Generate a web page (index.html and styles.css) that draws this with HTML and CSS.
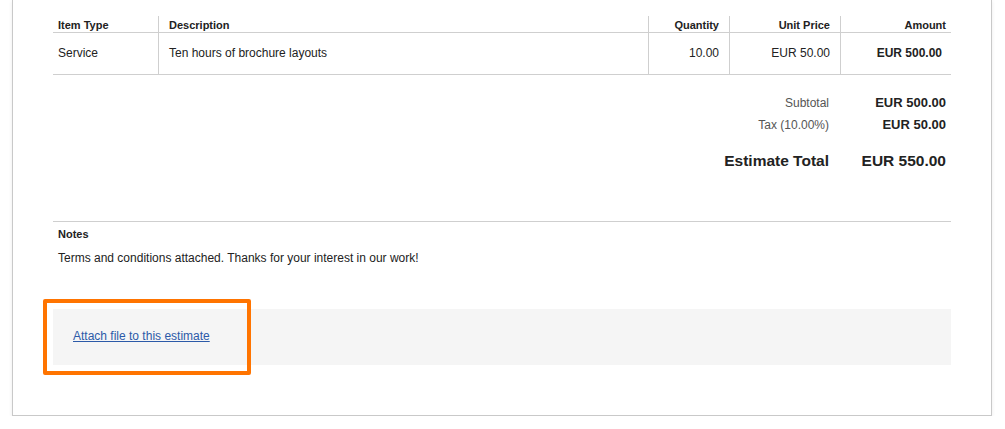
FILE: index.html
```html
<!DOCTYPE html>
<html lang="en">
<head>
<meta charset="utf-8">
<title>Estimate</title>
<link rel="stylesheet" href="styles.css">
</head>
<body>
<div class="card">
  <div class="items">
    <div class="cell head">Item Type</div>
    <div class="cell head sep">Description</div>
    <div class="cell head sep num">Quantity</div>
    <div class="cell head sep num">Unit Price</div>
    <div class="cell head sep num last">Amount</div>

    <div class="cell body">Service</div>
    <div class="cell body sep">Ten hours of brochure layouts</div>
    <div class="cell body sep num">10.00</div>
    <div class="cell body sep num">EUR 50.00</div>
    <div class="cell body sep num amount">EUR 500.00</div>
  </div>

  <div class="totals">
    <div class="t-label">Subtotal</div>
    <div class="t-value">EUR 500.00</div>
    <div class="t-label">Tax (10.00%)</div>
    <div class="t-value">EUR 50.00</div>
    <div class="t-label grand">Estimate Total</div>
    <div class="t-value grand">EUR 550.00</div>
  </div>

  <div class="notes">
    <div class="notes-title">Notes</div>
    <div class="notes-text">Terms and conditions attached. Thanks for your interest in our work!</div>
  </div>

  <div class="attach">
    <a class="attach-link" href="#">Attach file to this estimate</a>
    <div class="highlight"></div>
  </div>
</div>
</body>
</html>
```

FILE: styles.css
```css
* { box-sizing: border-box; }

html, body {
  margin: 0;
  padding: 0;
  background: #ffffff;
}

body {
  font-family: "Liberation Sans", Arial, Helvetica, sans-serif;
  color: #222222;
  font-size: 12px;
}

.card {
  margin-left: 12px;
  width: 980px;
  border: 1px solid #c9c9c9;
  border-top: 0;
  background: #ffffff;
  box-shadow: 0 1px 4px rgba(0, 0, 0, 0.08);
  padding: 16px 40px 50px 40px;
}

.items {
  display: grid;
  grid-template-columns: 105px 490px 81px 111px 111px;
  border-bottom: 1px solid #cfcfcf;
}

.cell {
  padding-left: 5px;
  padding-right: 10px;
}

.sep {
  border-left: 1px solid #cfcfcf;
  padding-left: 10px;
}

.head {
  height: 17px;
  border-bottom: 1px solid #cfcfcf;
  font-size: 11px;
  font-weight: bold;
  line-height: 13px;
  padding-top: 3px;
}

.head.last {
  padding-right: 5px;
}

.body {
  height: 41px;
  line-height: 16px;
  padding-top: 12px;
}

.num {
  text-align: right;
}

.amount {
  font-weight: bold;
  padding-right: 9px;
}

.totals {
  display: grid;
  grid-template-columns: auto 117px;
  justify-content: end;
  align-items: baseline;
  padding-right: 5px;
  margin-top: 17px;
}

.t-label {
  text-align: right;
  color: #555555;
  line-height: 21px;
  font-size: 12px;
}

.t-value {
  text-align: right;
  font-weight: bold;
  font-size: 13px;
  line-height: 21px;
  color: #222222;
}

.t-label.grand,
.t-value.grand {
  font-size: 15.5px;
  font-weight: bold;
  color: #222222;
  line-height: 20px;
  margin-top: 15px;
}

.notes {
  margin-top: 50px;
  border-top: 1px solid #cfcfcf;
  padding: 5px 5px 0 5px;
}

.notes-title {
  font-size: 11px;
  font-weight: bold;
  line-height: 14px;
}

.notes-text {
  margin-top: 9px;
  line-height: 16px;
}

.attach {
  position: relative;
  margin-top: 43px;
  height: 56px;
  background: #f5f5f5;
  padding: 19px 20px;
  line-height: 16px;
}

.attach-link {
  color: #2c5aa8;
  text-decoration: underline;
  font-size: 12px;
}

.highlight {
  position: absolute;
  left: -10px;
  top: -10px;
  width: 208px;
  height: 76px;
  border: 4px solid #ff7400;
  border-radius: 2px;
  pointer-events: none;
}
```
